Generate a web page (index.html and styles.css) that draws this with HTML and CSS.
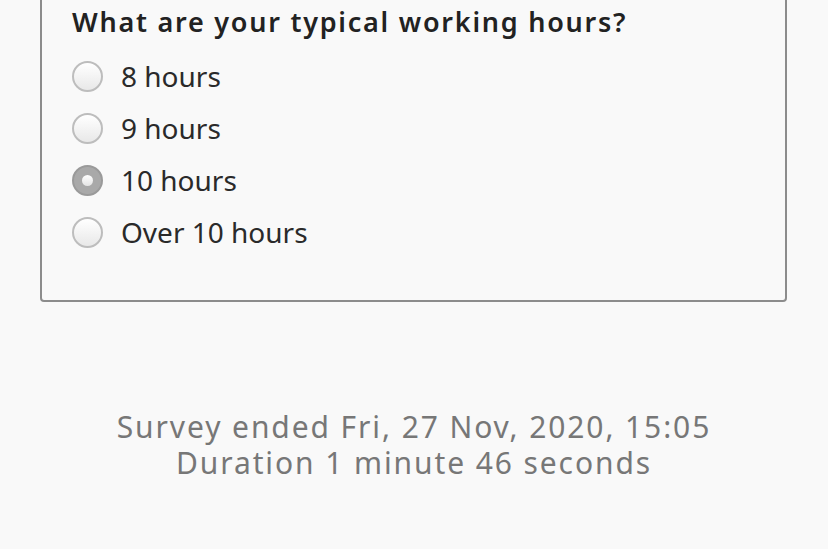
FILE: index.html
```html
<!DOCTYPE html>
<html>
<head>
    <meta charset="utf-8">
    <link rel="stylesheet" href="styles.css">
</head>
<body>
    <div class="question">
        <h3>What are your typical working hours?</h3>
        <label class="option"><span class="radio"></span>8 hours</label>
        <label class="option"><span class="radio"></span>9 hours</label>
        <label class="option"><span class="radio checked"></span>10 hours</label>
        <label class="option"><span class="radio"></span>Over 10 hours</label>
    </div>

    <div class="ended">
        <div>Survey ended Fri, 27 Nov, 2020, 15:05</div>
        <div>Duration 1 minute 46 seconds</div>
    </div>
</body>
</html>
```

FILE: styles.css
```css
body {
    margin: 0;
    background-color: #f9f9f9;
    font-family: "Noto Sans", "Open Sans", sans-serif;
    color: #222;
}

.question {
    margin: -30px 41px 0 40px;
    padding: 31px 30px 42px 30px;
    border: 2px solid #8c8c8c;
    border-radius: 4px;
}

h3 {
    margin: 0 0 9px 0;
    font-size: 27px;
    font-weight: 600;
    letter-spacing: 1.75px;
    line-height: 38px;
    color: #222;
}

.option {
    display: flex;
    align-items: center;
    gap: 18px;
    height: 52px;
    font-size: 28px;
    color: #2a2a2a;
}

.radio {
    box-sizing: border-box;
    width: 31px;
    height: 31px;
    border-radius: 50%;
    border: 2px solid #bdbdbd;
    background: linear-gradient(#ffffff, #e8e8e8);
    display: flex;
    align-items: center;
    justify-content: center;
}

.radio.checked {
    border-color: #9a9a9a;
    background: #a9a9a9;
}

.radio.checked::after {
    content: "";
    width: 11px;
    height: 11px;
    border-radius: 50%;
    background: linear-gradient(#ffffff, #e4e4e4);
}

.ended {
    margin-top: 107px;
    text-align: center;
    font-size: 30px;
    line-height: 36px;
    letter-spacing: 1.9px;
    color: #777;
}

.ended div {
    height: 36px;
    overflow: visible;
}
```
